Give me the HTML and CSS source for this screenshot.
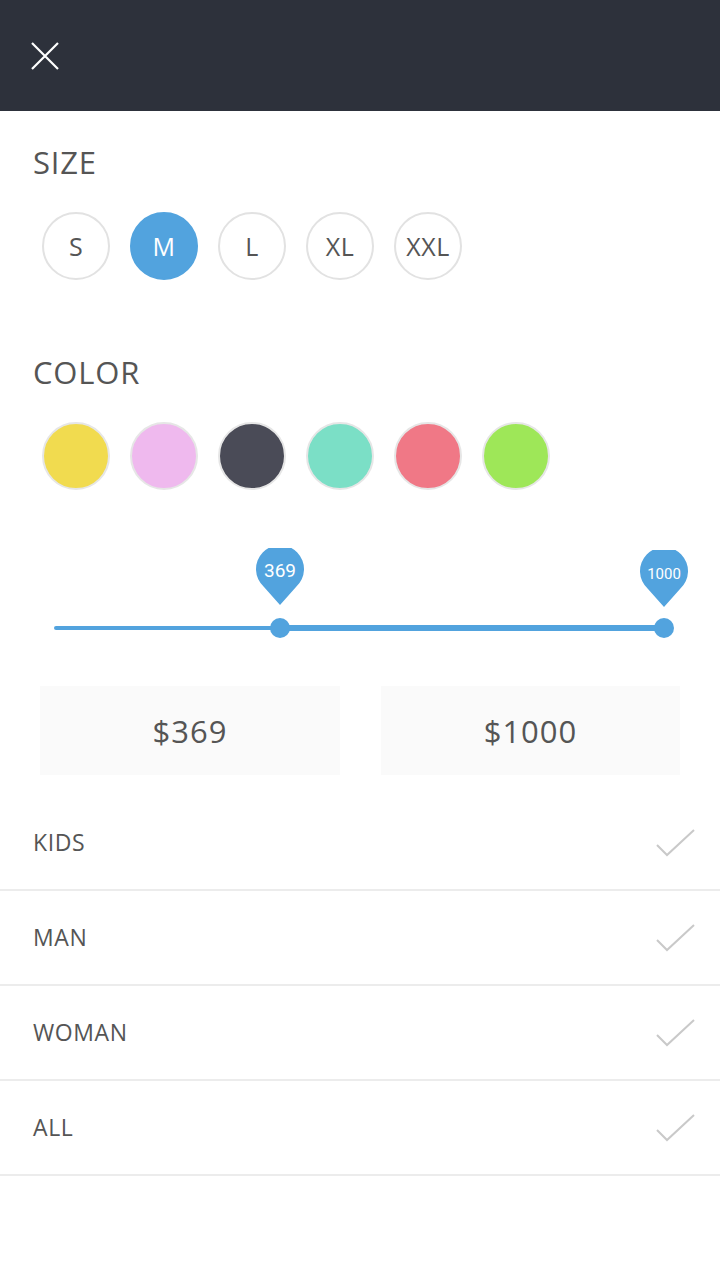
FILE: index.html
```html
<!DOCTYPE html>
<html>
<head>
<meta charset="utf-8">
<link rel="stylesheet" href="styles.css">
</head>
<body>
<header class="topbar">
  <svg class="close" width="28" height="28" viewBox="0 0 28 28"><path d="M1 1 L27 27 M27 1 L1 27" stroke="#fff" stroke-width="2.2" fill="none"/></svg>
</header>
<main class="filters">
  <section class="group">
    <h2 class="group-title">SIZE</h2>
    <div class="chips">
      <span class="chip">S</span>
      <span class="chip chip-active">M</span>
      <span class="chip">L</span>
      <span class="chip">XL</span>
      <span class="chip">XXL</span>
    </div>
  </section>
  <section class="group group-color">
    <h2 class="group-title">COLOR</h2>
    <div class="chips">
      <span class="swatch sw-yellow"></span>
      <span class="swatch sw-pink"></span>
      <span class="swatch sw-dark"></span>
      <span class="swatch sw-teal"></span>
      <span class="swatch sw-red"></span>
      <span class="swatch sw-green"></span>
    </div>
  </section>
  <div class="slider">
    <div class="track">
      <div class="track-sel" style="left:37.05%; right:0%"></div>
      <span class="thumb" style="left:37.05%"></span>
      <span class="thumb" style="left:100%"></span>
    </div>
    <div class="pin" style="left:37.05%">
      <svg width="48" height="58" viewBox="0 0 48 58"><path d="M24 57 L8 39 A24 24 0 1 1 40 39 Z" fill="#52a3de"/></svg>
      <span class="pin-label">369</span>
    </div>
    <div class="pin pin-end" style="left:100%">
      <svg width="48" height="58" viewBox="0 0 48 58"><path d="M24 57 L8 39 A24 24 0 1 1 40 39 Z" fill="#52a3de"/></svg>
      <span class="pin-label pin-label-small">1000</span>
    </div>
  </div>
  <div class="prices">
    <div class="price">$369</div>
    <div class="price">$1000</div>
  </div>
  <ul class="cats">
    <li class="cat"><span>KIDS</span><svg class="check" width="40" height="28" viewBox="0 0 40 28"><path d="M1 16 L11 26 L38 1" stroke="#c9c9c9" stroke-width="2" fill="none"/></svg></li>
    <li class="cat"><span>MAN</span><svg class="check" width="40" height="28" viewBox="0 0 40 28"><path d="M1 16 L11 26 L38 1" stroke="#c9c9c9" stroke-width="2" fill="none"/></svg></li>
    <li class="cat"><span>WOMAN</span><svg class="check" width="40" height="28" viewBox="0 0 40 28"><path d="M1 16 L11 26 L38 1" stroke="#c9c9c9" stroke-width="2" fill="none"/></svg></li>
    <li class="cat"><span>ALL</span><svg class="check" width="40" height="28" viewBox="0 0 40 28"><path d="M1 16 L11 26 L38 1" stroke="#c9c9c9" stroke-width="2" fill="none"/></svg></li>
  </ul>
</main>
</body>
</html>
```

FILE: styles.css
```css
* { box-sizing: border-box; }
body {
  margin: 0;
  background: #fff;
  font-family: "Open Sans", "Liberation Sans", sans-serif;
  color: #555;
  width: 720px;
}
.topbar {
  height: 111px;
  background: #2d313b;
  display: flex;
  align-items: center;
  padding-left: 31px;
}
.close { display: block; }
.filters { padding: 0; }
.group { padding: 0 0 0 33px; }
.group:first-child { padding-top: 33px; }
.group-color { padding-top: 74px; }
.group-title {
  margin: 0;
  font-size: 31px;
  line-height: 36px;
  font-weight: 400;
  color: #555;
  letter-spacing: 0.8px;
}
.chips {
  display: flex;
  gap: 20px;
  margin-top: 32px;
  padding-left: 9px;
}
.chip {
  width: 68px;
  height: 68px;
  border-radius: 50%;
  border: 2px solid #e2e2e2;
  display: flex;
  align-items: center;
  justify-content: center;
  font-size: 25px;
  letter-spacing: 0.5px;
  color: #555;
}
.chip-active {
  background: #52a3de;
  border-color: #52a3de;
  color: #fff;
}
.swatch {
  width: 68px;
  height: 68px;
  border-radius: 50%;
  border: 2px solid #e6e6e6;
}
.sw-yellow { background: #f1db4f; }
.sw-pink { background: #efb9ee; }
.sw-dark { background: #4a4b57; }
.sw-teal { background: #7bdfc6; }
.sw-red { background: #f07886; }
.sw-green { background: #9ee758; }

.slider {
  position: relative;
  height: 100px;
  margin: 58px 56px 0 54px;
}
.track {
  position: absolute;
  left: 0;
  right: 0;
  top: 78px;
  height: 4px;
  background: #52a3de;
  border-radius: 2px;
}
.track-sel {
  position: absolute;
  top: -1px;
  height: 6px;
  background: #52a3de;
}
.thumb {
  position: absolute;
  top: 2px;
  width: 20px;
  height: 20px;
  margin: -10px 0 0 -10px;
  border-radius: 50%;
  background: #52a3de;
}
.pin {
  position: absolute;
  top: 0;
  width: 48px;
  height: 58px;
  margin-left: -24px;
}
.pin-end { top: 2px; }
.pin svg { display: block; }
.pin-label {
  position: absolute;
  left: 0;
  right: 0;
  top: 11px;
  text-align: center;
  font-family: Roboto, "Liberation Sans", sans-serif;
  font-size: 19px;
  line-height: 24px;
  color: #fff;
}
.pin-label-small { font-size: 15px; top: 12px; }

.prices {
  display: grid;
  grid-template-columns: 300px 299px;
  gap: 41px;
  margin: 38px 0 0 40px;
}
.price {
  height: 89px;
  background: #fafafa;
  display: flex;
  align-items: center;
  justify-content: center;
  font-size: 31px;
  letter-spacing: 1px;
  color: #555;
}
.cats {
  list-style: none;
  margin: 21px 0 0;
  padding: 0;
}
.cat {
  height: 95px;
  border-bottom: 2px solid #ececec;
  display: flex;
  align-items: center;
  justify-content: space-between;
  padding: 0 24px 2px 33px;
  font-size: 23px;
  letter-spacing: 0.6px;
  color: #555;
}
.check { display: block; margin-top: 2px; }
```
